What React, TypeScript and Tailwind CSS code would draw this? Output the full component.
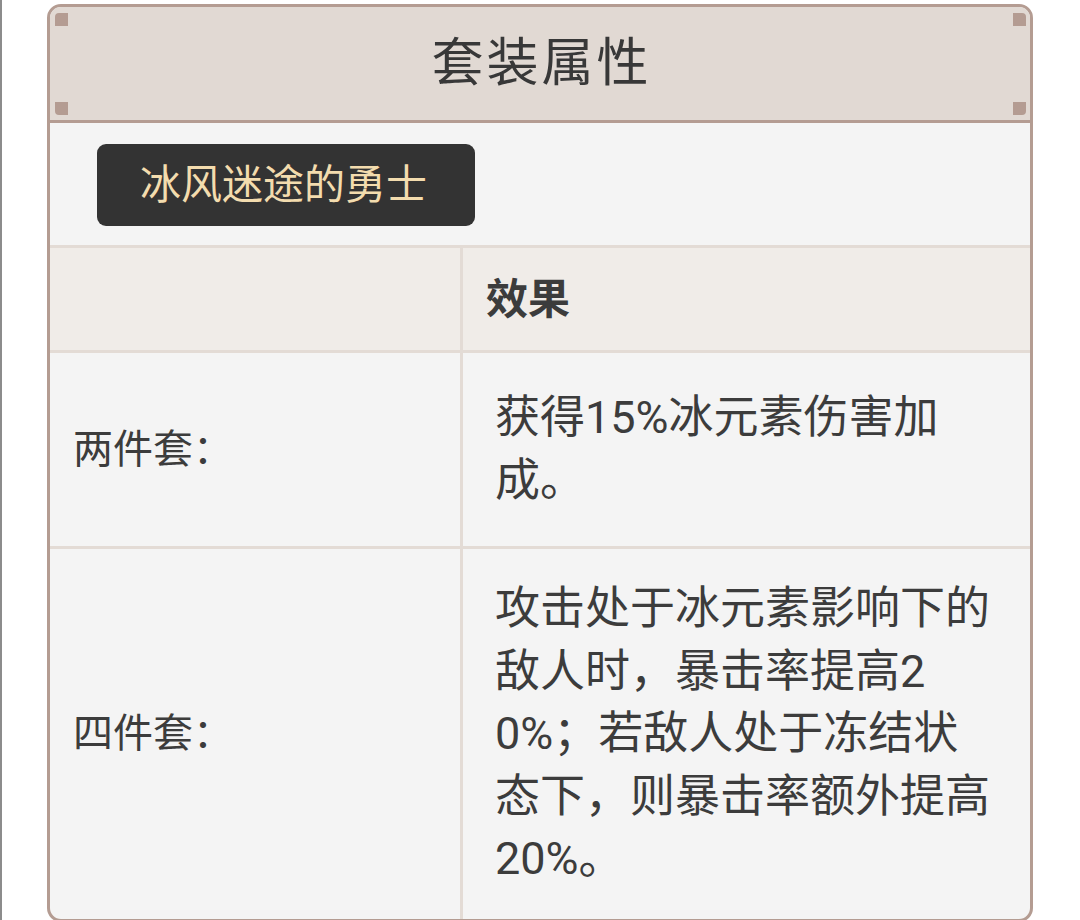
export default function App() {
    const font = { fontFamily: "Roboto, 'Noto Sans CJK SC', sans-serif" }
    return (
        <div style={font} className="min-h-screen bg-white border-l-2 border-[#8c8c8c] pl-[45px] pt-[4px]">
            <div className="w-[986px] rounded-[14px] border-[3px] border-[#b49c92] bg-[#f4f4f4] overflow-hidden">
                {/* header */}
                <div className="relative h-[116px] bg-[#e1d9d3] border-b-[3px] border-[#b49c92] flex items-center justify-center">
                    <span className="text-[52px] leading-none text-[#383838] tracking-[3px] pl-[3px]">套装属性</span>
                    <div className="absolute left-[5px] top-[6px] w-[13px] h-[13px] bg-[#b49c92] rounded-tl-[4px]"></div>
                    <div className="absolute left-[5px] bottom-[5px] w-[13px] h-[13px] bg-[#b49c92] rounded-bl-[4px]"></div>
                    <div className="absolute right-[4px] top-[6px] w-[13px] h-[13px] bg-[#b49c92] rounded-tr-[4px]"></div>
                    <div className="absolute right-[4px] bottom-[5px] w-[13px] h-[13px] bg-[#b49c92] rounded-br-[4px]"></div>
                </div>

                {/* set name */}
                <div className="px-[47px] pt-[21px] pb-[19px]">
                    <div className="inline-flex items-center h-[82px] pl-[43px] pr-[48px] rounded-[9px] bg-[#333333] text-[41px] leading-none text-[#f3dcae]">
                        冰风迷途的勇士
                    </div>
                </div>

                {/* table */}
                <div className="text-[#3c3c3c]">
                    <div className="flex border-t-[3px] border-[#e3dbd5] bg-[#f0ece8] h-[105px]">
                        <div className="w-[413px] border-r-[3px] border-[#e3dbd5]"></div>
                        <div className="flex-1 flex items-center pl-[23px] text-[42px] font-bold">效果</div>
                    </div>

                    <div className="flex border-t-[3px] border-[#e3dbd5]">
                        <div className="w-[413px] border-r-[3px] border-[#e3dbd5] flex items-center pl-[23px] text-[40px]">两件套：</div>
                        <div className="flex-1 pl-[32px] py-[34px] text-[45px] leading-[62.5px] whitespace-nowrap">
                            获得15%冰元素伤害加<br />成。
                        </div>
                    </div>

                    <div className="flex border-t-[3px] border-[#e3dbd5]">
                        <div className="w-[413px] border-r-[3px] border-[#e3dbd5] flex items-center pl-[23px] text-[40px]">四件套：</div>
                        <div className="flex-1 pl-[32px] pt-[29px] pb-[28px] text-[45px] leading-[62.5px] whitespace-nowrap">
                            攻击处于冰元素影响下的<br />
                            敌人时，暴击率提高2<br />
                            0%；若敌人处于冻结状<br />
                            态下，则暴击率额外提高<br />
                            20%。
                        </div>
                    </div>
                </div>
            </div>
        </div>
    )
}
